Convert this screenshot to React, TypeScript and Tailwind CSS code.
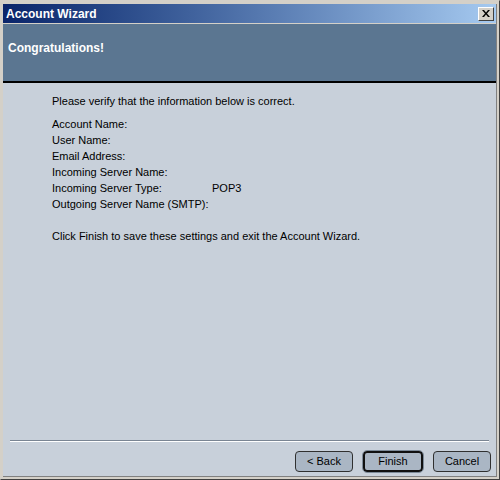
import React from 'react';

const font = { fontFamily: '"Liberation Sans", Arial, sans-serif' };

const rows: [string, string][] = [
  ['Account Name:', ''],
  ['User Name:', ''],
  ['Email Address:', ''],
  ['Incoming Server Name:', ''],
  ['Incoming Server Type:', 'POP3'],
  ['Outgoing Server Name (SMTP):', ''],
];

const WizardButton = ({ label, primary }: { label: string; primary?: boolean }) => (
  <button
    type="button"
    className={
      primary
        ? 'w-[60px] h-[21px] rounded-[4px] border-2 border-[#101010] bg-[#aab6c4] text-[11px] text-black outline outline-1 outline-[#7d8a98]'
        : 'w-[58px] h-[21px] rounded-[4px] border border-[#303030] bg-[#aab6c4] text-[11px] text-black'
    }
  >
    {label}
  </button>
);

export default function App() {
  return (
    <div
      className="w-[500px] h-[480px] flex flex-col bg-[#d4d0c8] border-t border-l border-t-[#d4d0c8] border-l-[#d4d0c8] border-r border-b border-r-[#404040] border-b-[#404040] p-[2px] pt-[3px]"
      style={font}
    >
      <div className="flex-1 flex flex-col border-r border-b border-[#808080]">
        {/* Title bar */}
        <div className="h-[19px] flex items-center justify-between pl-[3px] pr-[2px] bg-gradient-to-r from-[#0a246a] to-[#a6caf0]">
          <span className="text-white font-bold text-[12px] leading-none">Account Wizard</span>
          <div className="w-[16px] h-[14px] bg-[#d4d0c8] border border-t-white border-l-white border-r-[#404040] border-b-[#404040] flex items-center justify-center">
            <svg width="8" height="7" viewBox="0 0 8 7">
              <path d="M0 0h2l2 2.5L6 0h2L5 3.5 8 7H6L4 4.5 2 7H0l3-3.5z" fill="#000" />
            </svg>
          </div>
        </div>
        <div className="h-[1px] bg-[#d4d0c8]" />

        {/* Header */}
        <div className="h-[59px] bg-[#5b7691] border-b-2 border-black pl-[5px] pt-[11px]">
          <span className="text-white font-bold text-[12px] leading-[16px]">Congratulations!</span>
        </div>

        {/* Body */}
        <div className="flex-1 flex flex-col bg-[#c8d0da]">
          <div className="pl-[49px] pt-[10px] text-[11px] text-black leading-[16px]">
            <p>Please verify that the information below is correct.</p>
            <div className="mt-[7px]">
              {rows.map(([label, value]) => (
                <div key={label} className="flex">
                  <span className="w-[160px]">{label}</span>
                  <span>{value}</span>
                </div>
              ))}
            </div>
            <p className="mt-[16px]">Click Finish to save these settings and exit the Account Wizard.</p>
          </div>

          <div className="flex-1" />

          <div className="mx-[7px] border-t border-t-[#7a8593] border-b border-b-white" />
          <div className="flex justify-end gap-[10px] pr-[5px] pt-[9px] pb-[4px]">
            <WizardButton label="< Back" />
            <WizardButton label="Finish" primary />
            <WizardButton label="Cancel" />
          </div>
        </div>
      </div>
    </div>
  );
}
